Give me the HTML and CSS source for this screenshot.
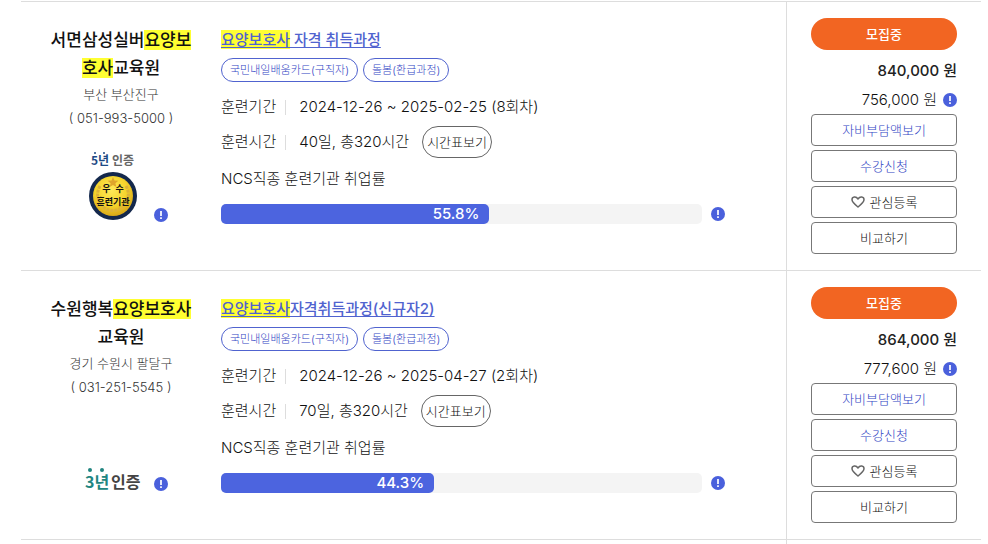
FILE: index.html
```html
<!DOCTYPE html>
<html lang="ko">
<head>
<meta charset="utf-8">
<meta name="viewport" content="width=device-width, initial-scale=1">
<title>훈련과정</title>
<link rel="stylesheet" href="styles.css">
</head>
<body>
<ul class="courses">
  <li class="course">
    <div class="org">
      <strong class="org-name">서면삼성실버<mark>요양보호사</mark>교육원</strong>
      <span class="org-line">부산 부산진구</span>
      <span class="org-line">( 051-993-5000 )</span>
      <div class="cert">
        <svg width="56" height="72" viewBox="0 0 56 72">
          <defs>
            <radialGradient id="gold" cx="45%" cy="35%" r="65%">
              <stop offset="0" stop-color="#ffe95a"/>
              <stop offset="0.6" stop-color="#f5d42c"/>
              <stop offset="1" stop-color="#d9a818"/>
            </radialGradient>
          </defs>
          <circle cx="10" cy="3" r="1" fill="#1d4a86"/>
          <circle cx="19" cy="3" r="1" fill="#1d4a86"/>
          <text x="6" y="15" class="cert-small cert-blue">5년</text>
          <text x="27" y="15" class="cert-small cert-gray">인증</text>
          <circle cx="28" cy="46" r="24" fill="#14284c"/>
          <circle cx="28" cy="46" r="20" fill="url(#gold)"/>
          <path d="M28 27l1.500 3.500 3.800.3-2.900 2.500.9 3.700-3.300-2-3.300 2 .9-3.700-2.900-2.500 3.800-.3z" fill="#dfa52c"/>
          <path d="M15 36q-6 11 3 20M41 36q6 11-3 20M18 57q10 7 20 0" fill="none" stroke="#dcb23a" stroke-width="3" stroke-dasharray="3 1"/>
          <text x="28" y="42" text-anchor="middle" class="medal-text" xml:space="preserve">우  수</text>
          <text x="28" y="55" text-anchor="middle" class="medal-text">훈련기관</text>
        </svg>
        <button class="info" type="button" aria-label="인증 안내"><svg width="14" height="14" viewBox="0 0 14 14"><circle cx="7" cy="7" r="7" fill="#4a60dc"/><path d="M7 3v5M7 9.300v1.700" stroke="#fff" stroke-width="1.700"/></svg></button>
      </div>
    </div>
    <div class="detail">
      <a class="title" href="#"><mark>요양보호사</mark> 자격 취득과정</a>
      <div class="tags"><span class="tag">국민내일배움카드(구직자)</span><span class="tag">돌봄(환급과정)</span></div>
      <div class="row"><span class="label">훈련기간</span><span>2024-12-26 ~ 2025-02-25 (8회차)</span></div>
      <div class="row"><span class="label">훈련시간</span><span>40일, 총320시간</span><button class="timetable" type="button">시간표보기</button></div>
      <p class="rate-label">NCS직종 훈련기관 취업률</p>
      <div class="rate">
        <div class="track"><div class="fill" style="width:55.8%">55.8%</div></div>
        <button class="info" type="button" aria-label="취업률 안내"><svg width="14" height="14" viewBox="0 0 14 14"><circle cx="7" cy="7" r="7" fill="#4a60dc"/><path d="M7 3v5M7 9.300v1.700" stroke="#fff" stroke-width="1.700"/></svg></button>
      </div>
    </div>
    <div class="side">
      <span class="status">모집중</span>
      <div class="prices">
        <strong class="price">840,000 원</strong>
        <span class="price">756,000 원 <button class="info" type="button" aria-label="금액 안내"><svg width="14" height="14" viewBox="0 0 14 14"><circle cx="7" cy="7" r="7" fill="#4a60dc"/><path d="M7 3v5M7 9.300v1.700" stroke="#fff" stroke-width="1.700"/></svg></button></span>
      </div>
      <div class="actions">
        <button class="action blue" type="button">자비부담액보기</button>
        <button class="action blue" type="button">수강신청</button>
        <button class="action" type="button"><svg width="14" height="12" viewBox="0 0 14 12"><path d="M7 11C4 8.600 1 6.300 1 3.800 1 .7 5 0 7 3c2-3 6-2.300 6 .8C13 6.300 10 8.600 7 11z" fill="none" stroke="#666" stroke-width="1.500" stroke-linejoin="round"/></svg>관심등록</button>
        <button class="action" type="button">비교하기</button>
      </div>
    </div>
  </li>
  <li class="course">
    <div class="org">
      <strong class="org-name">수원행복<mark>요양보호사</mark>교육원</strong>
      <span class="org-line">경기 수원시 팔달구</span>
      <span class="org-line">( 031-251-5545 )</span>
      <div class="cert">
        <svg width="56" height="30" viewBox="0 0 56 30">
          <circle cx="5" cy="9" r="2" fill="#218580"/>
          <circle cx="17" cy="9" r="2" fill="#218580"/>
          <text x="0" y="27" class="cert-large cert-teal">3년</text>
          <text x="26" y="27" class="cert-large cert-dark">인증</text>
        </svg>
        <button class="info" type="button" aria-label="인증 안내"><svg width="14" height="14" viewBox="0 0 14 14"><circle cx="7" cy="7" r="7" fill="#4a60dc"/><path d="M7 3v5M7 9.300v1.700" stroke="#fff" stroke-width="1.700"/></svg></button>
      </div>
    </div>
    <div class="detail">
      <a class="title" href="#"><mark>요양보호사</mark>자격취득과정(신규자2)</a>
      <div class="tags"><span class="tag">국민내일배움카드(구직자)</span><span class="tag">돌봄(환급과정)</span></div>
      <div class="row"><span class="label">훈련기간</span><span>2024-12-26 ~ 2025-04-27 (2회차)</span></div>
      <div class="row"><span class="label">훈련시간</span><span>70일, 총320시간</span><button class="timetable" type="button">시간표보기</button></div>
      <p class="rate-label">NCS직종 훈련기관 취업률</p>
      <div class="rate">
        <div class="track"><div class="fill" style="width:44.3%">44.3%</div></div>
        <button class="info" type="button" aria-label="취업률 안내"><svg width="14" height="14" viewBox="0 0 14 14"><circle cx="7" cy="7" r="7" fill="#4a60dc"/><path d="M7 3v5M7 9.300v1.700" stroke="#fff" stroke-width="1.700"/></svg></button>
      </div>
    </div>
    <div class="side">
      <span class="status">모집중</span>
      <div class="prices">
        <strong class="price">864,000 원</strong>
        <span class="price">777,600 원 <button class="info" type="button" aria-label="금액 안내"><svg width="14" height="14" viewBox="0 0 14 14"><circle cx="7" cy="7" r="7" fill="#4a60dc"/><path d="M7 3v5M7 9.300v1.700" stroke="#fff" stroke-width="1.700"/></svg></button></span>
      </div>
      <div class="actions">
        <button class="action blue" type="button">자비부담액보기</button>
        <button class="action blue" type="button">수강신청</button>
        <button class="action" type="button"><svg width="14" height="12" viewBox="0 0 14 12"><path d="M7 11C4 8.600 1 6.300 1 3.800 1 .7 5 0 7 3c2-3 6-2.300 6 .8C13 6.300 10 8.600 7 11z" fill="none" stroke="#666" stroke-width="1.500" stroke-linejoin="round"/></svg>관심등록</button>
        <button class="action" type="button">비교하기</button>
      </div>
    </div>
  </li>
  <li class="course rest"><div class="side"></div></li>
</ul>
</body>
</html>
```
FILE: styles.css
```css
* {
  box-sizing: border-box;
}

body {
  margin: 0;
  background: #fff;
  color: #111;
  font-family: Inter, "Noto Sans CJK KR", sans-serif;
  font-size: 15px;
  font-weight: 300;
  line-height: 24px;
}

button {
  margin: 0;
  padding: 0;
  border: 0;
  background: none;
  color: inherit;
  font: inherit;
  cursor: pointer;
}

mark {
  background: #ffff32;
  color: inherit;
}

.courses {
  display: flex;
  flex-direction: column;
  min-height: 100vh;
  margin: 0;
  padding: 1px 7px 0 21px;
  list-style: none;
}

.course {
  display: grid;
  grid-template-columns: 200px 1fr 195px;
  border-top: 1px solid #ddd;
}

.rest {
  flex: 1;
}

.rest .side {
  grid-column: 3;
  padding: 0;
}

.org {
  display: flex;
  flex-direction: column;
  padding: 24px 25px 48px;
  text-align: center;
}

.org-name {
  font-size: 17px;
  font-weight: 500;
  line-height: 28px;
}

.org-line {
  color: #333;
  font-size: 13px;
}

.cert {
  display: flex;
  align-items: flex-end;
  gap: 13px;
  margin-top: auto;
  padding-left: 39px;
}

.cert-small,
.cert-large,
.medal-text {
  font-family: "Noto Sans CJK KR", sans-serif;
  font-weight: 700;
}

.cert-small {
  font-size: 12px;
}

.cert-large {
  font-size: 16px;
}

.cert-blue {
  fill: #1d4a86;
}

.cert-gray {
  fill: #666;
}

.cert-teal {
  fill: #218580;
}

.cert-dark {
  fill: #444;
}

.medal-text {
  fill: #111;
  font-size: 9px;
  white-space: pre;
}

.info {
  flex: none;
  width: 14px;
  height: 14px;
}

.info svg {
  display: block;
}

.detail {
  padding: 24px 61px 0 0;
}

.title {
  display: block;
  color: #5063cf;
  font-weight: 500;
  line-height: 28px;
  text-underline-offset: 2px;
}

.tags {
  display: flex;
  gap: 5px;
  margin: 4px 0 9px;
}

.tag {
  padding: 0 8px;
  border: 1px solid #5063cf;
  border-radius: 12px;
  color: #3245c4;
  font-size: 11px;
  line-height: 22px;
}

.row {
  display: flex;
  align-items: center;
  height: 32px;
  margin-bottom: 3px;
}

.label {
  display: flex;
  align-items: center;
}

.label::after {
  width: 1px;
  height: 15px;
  margin: 0 13px 0 9px;
  background: #ddd;
  content: "";
}

.timetable {
  height: 32px;
  margin-left: 13px;
  padding: 0 4px;
  border: 1px solid #666;
  border-radius: 16px;
  font-size: 13px;
}

.rate-label {
  margin: 9px 0 13px;
}

.rate {
  display: flex;
  align-items: center;
  gap: 9px;
}

.track {
  flex: 1;
  border-radius: 5px;
  background: #f4f4f4;
}

.fill {
  padding-right: 10px;
  border-radius: 5px;
  background: #4c64df;
  color: #fff;
  font-weight: 500;
  line-height: 20px;
  text-align: right;
}

.side {
  padding: 16px 24px;
  border-left: 1px solid #ddd;
}

.status {
  display: block;
  border-radius: 16px;
  background: #f26522;
  color: #fff;
  font-size: 13px;
  font-weight: 500;
  line-height: 32px;
  text-align: center;
}

.prices {
  margin-top: 6px;
}

.price {
  display: flex;
  align-items: center;
  justify-content: flex-end;
  gap: 6px;
  line-height: 29px;
}

strong.price {
  color: #222;
  font-weight: 500;
}

.actions {
  display: grid;
  gap: 4px;
}

.action {
  display: flex;
  align-items: center;
  justify-content: center;
  gap: 5px;
  height: 32px;
  border: 1px solid #777;
  border-radius: 4px;
  font-size: 13px;
}

.blue {
  color: #3245c4;
}
```
